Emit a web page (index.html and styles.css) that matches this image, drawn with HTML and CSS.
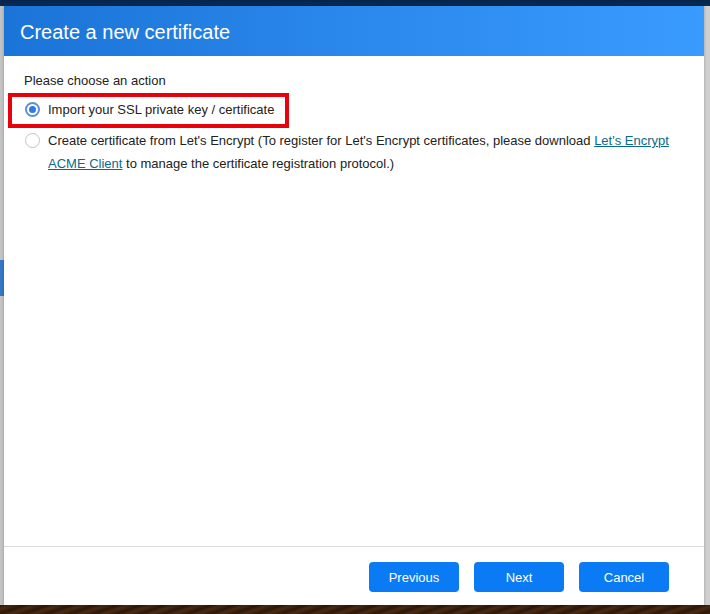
FILE: index.html
```html
<!DOCTYPE html>
<html>
<head>
<meta charset="utf-8">
<link rel="stylesheet" href="styles.css">
</head>
<body>
<div class="backdrop">
  <div class="dialog">
    <div class="header"><h1 class="title">Create a new certificate</h1></div>
    <div class="body">
      <p class="prompt">Please choose an action</p>
      <div class="option selected-box">
        <span class="radio radio-on"><span class="dot"></span></span>
        <span class="label">Import your SSL private key / certificate</span>
      </div>
      <div class="option option-second">
        <span class="radio"></span>
        <span class="label">Create certificate from Let's Encrypt (To register for Let's Encrypt certificates, please download <a class="link" href="#">Let's Encrypt ACME Client</a> to manage the certificate registration protocol.)</span>
      </div>
    </div>
    <div class="footer">
      <button class="btn">Previous</button>
      <button class="btn">Next</button>
      <button class="btn">Cancel</button>
    </div>
  </div>
</div>
</body>
</html>
```
FILE: styles.css
```css
* { box-sizing: border-box; }
html, body { margin: 0; padding: 0; }
body {
  width: 710px;
  height: 614px;
  overflow: hidden;
  font-family: "Liberation Sans", Arial, sans-serif;
}
.backdrop {
  width: 710px;
  height: 614px;
  padding: 6px 6px 0 4px;
  background:
    linear-gradient(#3479c8, #3479c8) 0 260px / 4px 36px no-repeat,
    linear-gradient(to bottom, #06244a 0, #0a2d58 6px, transparent 6px) 0 0 / 100% 6px no-repeat,
    repeating-linear-gradient(160deg, #2a1608 0, #4a2a12 4px, #2e1a0c 8px) 0 605px / 100% 9px no-repeat,
    linear-gradient(to right, #c4c4c4, #d0d0d0);
}
.dialog {
  width: 700px;
  height: 599px;
  background: #fff;
  display: flex;
  flex-direction: column;
  box-shadow: 0 0 3px rgba(0,0,0,0.25);
}
.header {
  height: 50px;
  flex: none;
  display: flex;
  align-items: center;
  padding: 2px 16px 0;
  background: linear-gradient(to right, #1b74d8, #3a9bff);
}
.title {
  margin: 0;
  font-size: 20px;
  font-weight: normal;
  color: #fff;
}
.body {
  flex: 1;
  padding: 17px 20px 0 4px;
}
.prompt {
  margin: 0 0 0 16px;
  font-size: 13px;
  line-height: 16px;
  color: #222;
}
.option {
  display: flex;
  align-items: flex-start;
  font-size: 13px;
  line-height: 23px;
  color: #222;
}
.selected-box {
  margin-top: 4px;
  width: 281px;
  height: 35px;
  border: 4px solid #e8000b;
  padding: 1px 0 0 13px;
  line-height: 23px;
}
.option-second {
  margin-top: 1px;
  padding-left: 17px;
}
.radio {
  flex: none;
  width: 15px;
  height: 15px;
  margin-top: 4px;
  margin-right: 8px;
  border-radius: 50%;
  border: 1.5px solid #c3c3c3;
  background: #fff;
  display: flex;
  align-items: center;
  justify-content: center;
}
.radio-on {
  border: 2px solid #5b8fd8;
}
.dot {
  width: 7px;
  height: 7px;
  border-radius: 50%;
  background: #2b7be3;
}
.label { flex: 1; }
.link {
  color: #0a6a8c;
  text-decoration: underline;
}
.footer {
  flex: none;
  height: 59px;
  border-top: 1px solid #dcdcdc;
  display: flex;
  justify-content: flex-end;
  align-items: flex-start;
  gap: 15px;
  padding: 15px 35px 0 0;
}
.btn {
  width: 90px;
  height: 30px;
  border: none;
  border-radius: 4px;
  background: #0b7bf5;
  color: #fff;
  font-family: "Liberation Sans", Arial, sans-serif;
  font-size: 13px;
  padding: 0;
}
```
